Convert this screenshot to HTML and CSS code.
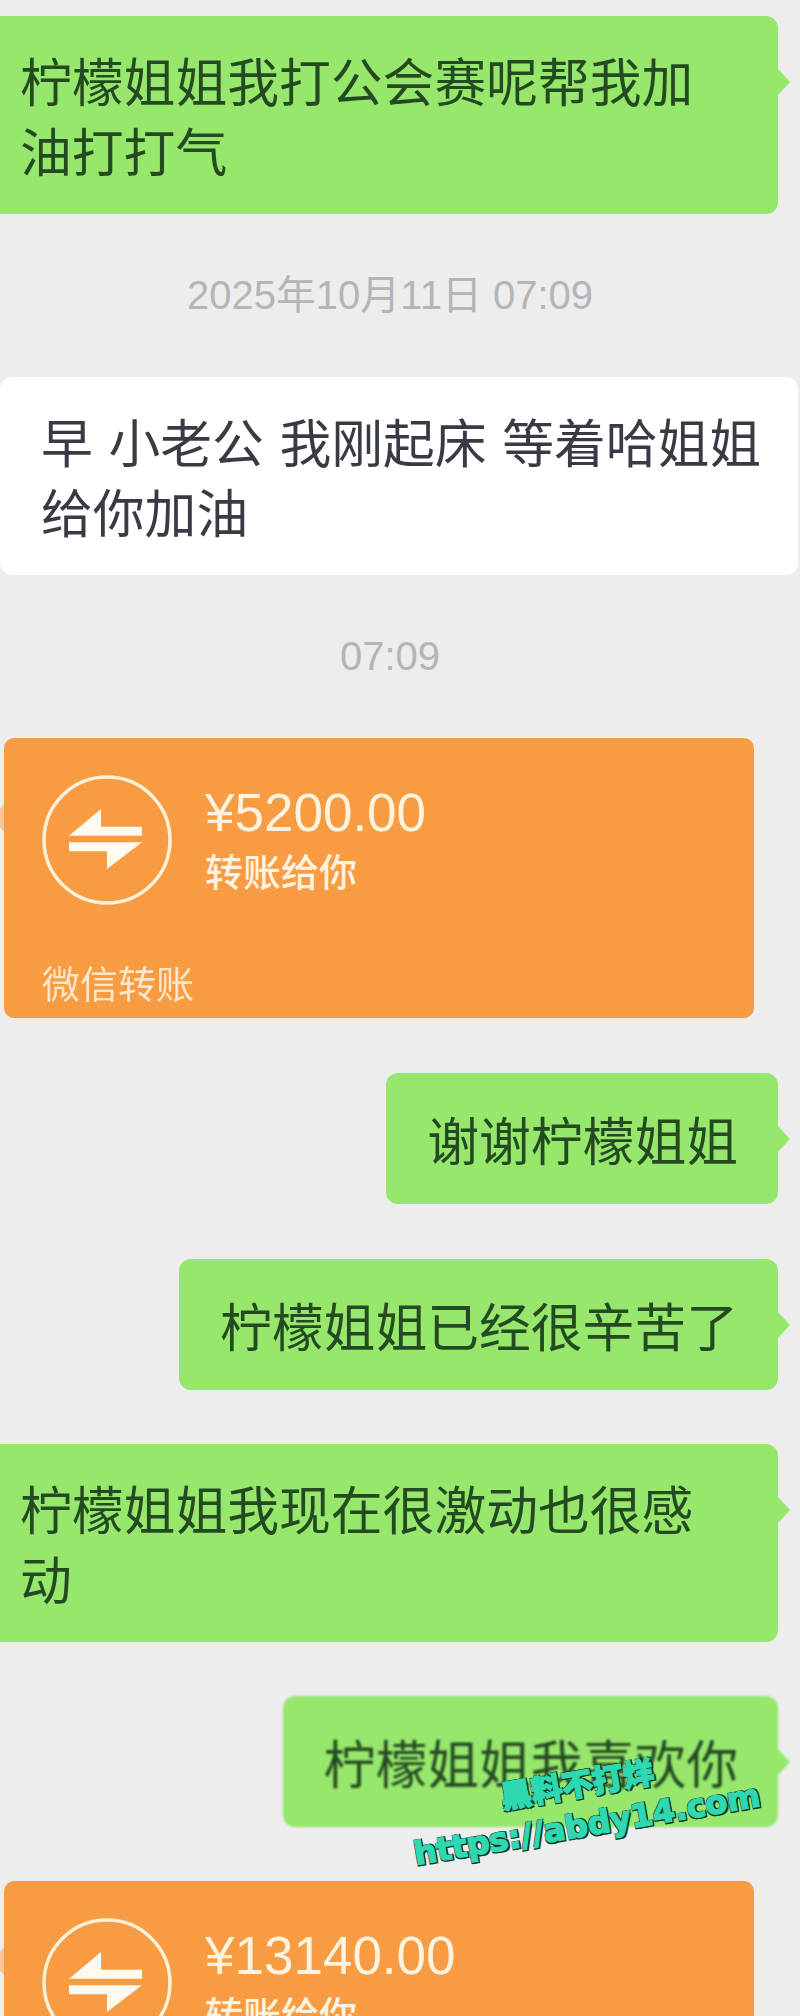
FILE: index.html
```html
<!DOCTYPE html>
<html lang="zh-CN">
<head>
  <meta charset="UTF-8" />
  <meta name="viewport" content="width=device-width, initial-scale=1.0"/>
  <title>聊天记录</title>
  <link rel="stylesheet" href="styles.css">
</head>
<body>
  <div class="chat">
    <div class="row mine first">
      <div class="bubble green full">柠檬姐姐我打公会赛呢帮我加油打打气</div>
    </div>

    <div class="time">2025年10月11日 07:09</div>

    <div class="row">
      <div class="bubble white">早 小老公 我刚起床 等着哈姐姐给你加油</div>
    </div>

    <div class="time">07:09</div>

    <div class="row">
      <div class="transfer">
        <div class="transfer-main">
          <svg class="transfer-icon" viewBox="0 0 130 130">
            <circle cx="65" cy="65" r="63" fill="none" stroke="#fff1d8" stroke-width="3.5" />
            <path d="M27 60.7 L59 34 V51.7 H100 V60.7 Z" fill="#fffaf0" />
            <path d="M27 67.3 H100 L65 94 V76.3 H27 Z" fill="#fffaf0" />
          </svg>
          <div class="transfer-text">
            <div class="amount">¥5200.00</div>
            <div class="caption">转账给你</div>
          </div>
        </div>
        <div class="transfer-foot">微信转账</div>
      </div>
    </div>

    <div class="row mine gap-wide">
      <div class="bubble green short">谢谢柠檬姐姐</div>
    </div>

    <div class="row mine gap-wide">
      <div class="bubble green short">柠檬姐姐已经很辛苦了</div>
    </div>

    <div class="row mine gap">
      <div class="bubble green full">柠檬姐姐我现在很激动也很感动</div>
    </div>

    <div class="row mine gap">
      <div class="bubble green short soft">柠檬姐姐我喜欢你</div>
    </div>

    <div class="row gap">
      <div class="transfer">
        <div class="transfer-main">
          <svg class="transfer-icon" viewBox="0 0 130 130">
            <circle cx="65" cy="65" r="63" fill="none" stroke="#fff1d8" stroke-width="3.5" />
            <path d="M27 60.7 L59 34 V51.7 H100 V60.7 Z" fill="#fffaf0" />
            <path d="M27 67.3 H100 L65 94 V76.3 H27 Z" fill="#fffaf0" />
          </svg>
          <div class="transfer-text">
            <div class="amount">¥13140.00</div>
            <div class="caption">转账给你</div>
          </div>
        </div>
      </div>
    </div>
  </div>

  <div class="stamp">
    <div class="stamp-title">黑料不打烊</div>
    <div class="stamp-link">https://abdy14.com</div>
  </div>
</body>
</html>
```

FILE: styles.css
```css
html, body {
  margin: 0;
  padding: 0;
  background: #ededed;
  width: 800px;
  height: 2016px;
  overflow: hidden;
  font-family: "Liberation Sans", "Noto Sans CJK SC", sans-serif;
}

body {
  position: relative;
}

.chat {
  display: flex;
  flex-direction: column;
}

.row {
  display: flex;
  justify-content: flex-start;
}

.row.mine {
  justify-content: flex-end;
  padding-right: 22px;
}

.first {
  margin-top: 16px;
}

.gap {
  margin-top: 54px;
}

.gap-wide {
  margin-top: 55px;
}

.bubble {
  position: relative;
  box-sizing: border-box;
  padding: 29px 40px 29px 41px;
  border-radius: 12px;
  font-family: "Noto Sans CJK SC", sans-serif;
  font-size: 51.8px;
  line-height: 70px;
}

.bubble.short {
  padding-top: 30.5px;
  padding-bottom: 30.5px;
}

.bubble.full {
  width: 778px;
  padding-left: 20px;
  padding-right: 80px;
  border-radius: 0 12px 12px 0;
}

.soft {
  filter: blur(1px);
}

.green {
  background: #97e76d;
  color: #244a22;
}

/* little tail on the right side of my messages */
.green::after {
  content: "";
  position: absolute;
  top: 52px;
  right: -12px;
  border-left: 13px solid #97e76d;
  border-top: 14px solid transparent;
  border-bottom: 14px solid transparent;
}

.white {
  width: 798px;
  padding-left: 41px;
  padding-right: 30px;
  background: #fff;
  color: #383b44;
  word-spacing: 4px;
}

.time {
  margin: 59px 0 60px;
  padding-right: 20px;
  text-align: center;
  font-size: 40px;
  line-height: 44px;
  color: #b3b5b8;
}

.transfer {
  position: relative;
  box-sizing: border-box;
  width: 750px;
  height: 280px;
  margin-left: 4px;
  padding: 37px 0 0 38px;
  border-radius: 10px;
  background: #f79c42;
  color: #fff3df;
}

/* sliver of the tail, mostly off the left edge */
.transfer::before {
  content: "";
  position: absolute;
  top: 66px;
  left: -12px;
  border-right: 12px solid #f9c698;
  border-top: 14px solid transparent;
  border-bottom: 14px solid transparent;
}

.transfer-main {
  display: flex;
  align-items: flex-start;
  gap: 33px;
}

.transfer-icon {
  flex: none;
  width: 130px;
  height: 130px;
}

.amount {
  margin-top: 6px;
  font-size: 53px;
  line-height: 64px;
}

.caption {
  font-family: "Noto Sans CJK SC", sans-serif;
  font-size: 38px;
  font-weight: 500;
  line-height: 50px;
}

.transfer-foot {
  margin-top: 52px;
  font-family: "Noto Sans CJK SC", sans-serif;
  font-size: 38px;
  line-height: 50px;
  opacity: 0.85;
}

/* tilted site stamp that sits over the chat */
.stamp {
  position: absolute;
  left: 408px;
  top: 1763px;
  width: 350px;
  transform: rotate(-9.7deg);
  text-align: right;
  color: #2ed8b0;
  font-family: "DejaVu Sans", "Noto Sans CJK SC", sans-serif;
  font-weight: 700;
  -webkit-text-stroke: 1.4px #2ed8b0;
  text-shadow: 2px 2px 0 #12352d, -1px -1px 0 #12352d, 2px -1px 0 #12352d, -1px 2px 0 #12352d;
}

.stamp-title {
  padding-right: 100px;
  font-family: "Noto Sans CJK SC", sans-serif;
  font-weight: 900;
  font-size: 31px;
  line-height: 38px;
}

.stamp-link {
  margin-top: 4px;
  font-size: 32px;
  line-height: 40px;
  white-space: nowrap;
}
```
